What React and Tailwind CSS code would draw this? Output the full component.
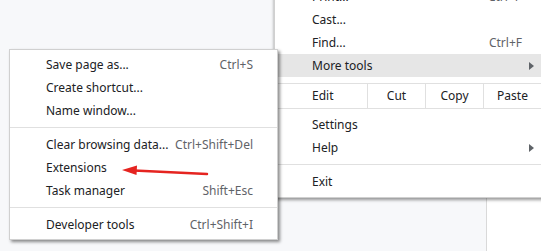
import React from "react";

const font = { fontFamily: '"Noto Sans", "Open Sans", sans-serif' };

function Item({ label, shortcut, arrow, active }) {
  return (
    <div
      className={`flex h-[23px] items-center justify-between pl-[37px] pr-[23px] ${
        active ? "bg-[#e6e6e6]" : ""
      }`}
    >
      <span className="text-[#202124]">{label}</span>
      {shortcut && <span className="text-[#5f6368]">{shortcut}</span>}
      {arrow && (
        <svg width="5" height="8" viewBox="0 0 5 8" className="mr-[-12px]">
          <path d="M0 0 L5 4 L0 8 Z" fill="#5f6368" />
        </svg>
      )}
    </div>
  );
}

function SubItem({ label, shortcut }) {
  return (
    <div className="flex h-[23px] items-center justify-between pl-[36px] pr-[24px]">
      <span className="text-[#202124]">{label}</span>
      {shortcut && <span className="text-[#5f6368]">{shortcut}</span>}
    </div>
  );
}

function Sep() {
  return <div className="my-[5px] h-px bg-[#e0e0e0]" />;
}

export default function App() {
  return (
    <div className="relative h-[251px] w-[541px] overflow-hidden text-[12px]" style={font}>
      {/* page behind the menus */}
      <div className="flex h-full">
        <div className="h-full w-[487px] border-r border-[#d9d9d9] bg-[#f7f8fa]" />
        <div className="h-full flex-1 bg-white" />
      </div>

      {/* main menu */}
      <div className="absolute left-[274px] top-[-19px] w-[272px] border border-[#d0d0d0] bg-white pb-[4px] pt-[3px] shadow-[0_2px_3px_rgba(0,0,0,0.4)]">
        <Item label="Print..." shortcut="Ctrl+P" />
        <Item label="Cast..." />
        <Item label="Find..." shortcut="Ctrl+F" />
        <Item label="More tools" arrow active />
        <div className="mt-[6px] flex h-[26px] border-y border-[#e0e0e0]">
          <div className="flex w-[92px] items-center pl-[37px] text-[#202124]">Edit</div>
          <div className="flex w-[58px] items-center justify-center border-l border-[#e0e0e0] text-[#202124]">Cut</div>
          <div className="flex w-[58px] items-center justify-center border-l border-[#e0e0e0] text-[#202124]">Copy</div>
          <div className="flex w-[58px] items-center justify-center border-l border-[#e0e0e0] text-[#202124]">Paste</div>
        </div>
        <div className="h-[4px]" />
        <Item label="Settings" />
        <Item label="Help" arrow />
        <Sep />
        <Item label="Exit" />
      </div>

      {/* more tools submenu */}
      <div className="absolute left-[9px] top-[49px] w-[269px] border border-[#d0d0d0] bg-white py-[3px] shadow-[2px_2px_3px_rgba(0,0,0,0.45)]">
        <SubItem label="Save page as..." shortcut="Ctrl+S" />
        <SubItem label="Create shortcut..." />
        <SubItem label="Name window..." />
        <Sep />
        <SubItem label="Clear browsing data..." shortcut="Ctrl+Shift+Del" />
        <SubItem label="Extensions" />
        <SubItem label="Task manager" shortcut="Shift+Esc" />
        <Sep />
        <SubItem label="Developer tools" shortcut="Ctrl+Shift+I" />
      </div>

      {/* red annotation arrow */}
      <svg className="absolute left-0 top-0" width="541" height="251" viewBox="0 0 541 251">
        <line x1="207" y1="174" x2="134" y2="170.5" stroke="#e52420" strokeWidth="2.5" strokeLinecap="round" />
        <path d="M122 170 L137 165.5 L136.5 175 Z" fill="#e52420" />
      </svg>
    </div>
  );
}
